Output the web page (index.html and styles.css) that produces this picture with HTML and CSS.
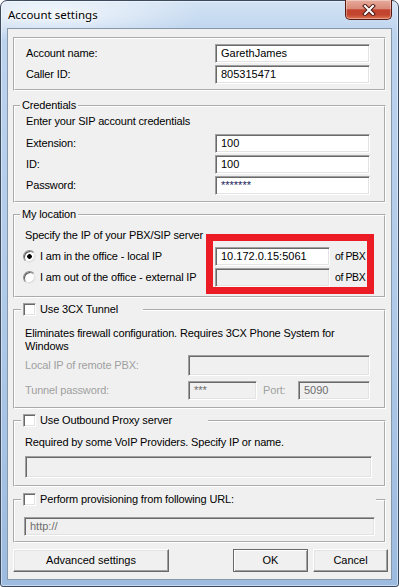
FILE: index.html
```html
<!DOCTYPE html>
<html>
<head>
<meta charset="utf-8">
<title>Account settings</title>
<link rel="stylesheet" href="styles.css">
</head>
<body>
<div class="window">
  <div class="titlebar">
    <span class="title">Account settings</span>
    <div class="close">
      <svg width="14" height="12" viewBox="0 0 14 12"><path d="M3 2 L11 10 M11 2 L3 10" stroke="#4d1a12" stroke-width="4" stroke-linecap="square"/><path d="M3 2 L11 10 M11 2 L3 10" stroke="#fff" stroke-width="2" stroke-linecap="square"/></svg>
    </div>
  </div>
  <div class="client">
    <div class="group g-account">
      <div class="form">
        <span class="lbl">Account name:</span><div class="edit">GarethJames</div>
        <span class="lbl">Caller ID:</span><div class="edit">805315471</div>
      </div>
    </div>

    <fieldset class="group g-cred">
      <legend class="legend-text">Credentials</legend>
      <div class="gb-body">
        <div class="note">Enter your SIP account credentials</div>
        <div class="form form-cred">
          <span class="lbl">Extension:</span><div class="edit">100</div>
          <span class="lbl">ID:</span><div class="edit">100</div>
          <span class="lbl">Password:</span><div class="edit pw">*******</div>
        </div>
      </div>
    </fieldset>

    <fieldset class="group g-loc">
      <legend class="legend-text">My location</legend>
      <div class="loc-body">
        <div class="note">Specify the IP of your PBX/SIP server</div>
        <div class="loc-rows">
          <span class="radio-lbl"><span class="radio checked"></span>I am in the office - local IP</span>
          <div class="edit">10.172.0.15:5061</div>
          <span class="pbx">of PBX</span>
          <span class="radio-lbl"><span class="radio"></span>I am out of the office - external IP</span>
          <div class="edit disabled"></div>
          <span class="pbx">of PBX</span>
        </div>
        <div class="highlight"></div>
      </div>
    </fieldset>

    <fieldset class="group g-tunnel">
      <legend class="legend-check lg-tunnel"><span class="check"></span>Use 3CX Tunnel</legend>
      <div class="gb-body">
        <div class="note two">Eliminates firewall configuration. Requires 3CX Phone System for<br>Windows</div>
        <div class="tun-row tun-row1">
          <span class="lbl dis">Local IP of remote PBX:</span>
          <div class="edit disabled wide"></div>
        </div>
        <div class="tun-row tun-row2">
          <span class="lbl dis">Tunnel password:</span>
          <div class="edit disabled pass">***</div>
          <span class="lbl dis port-lbl">Port:</span>
          <div class="edit disabled port">5090</div>
        </div>
      </div>
    </fieldset>

    <fieldset class="group g-proxy">
      <legend class="legend-check lg-proxy"><span class="check"></span>Use Outbound Proxy server</legend>
      <div class="gb-body">
        <div class="note">Required by some VoIP Providers. Specify IP or name.</div>
        <div class="edit disabled proxy-edit"></div>
      </div>
    </fieldset>

    <fieldset class="group g-prov">
      <legend class="legend-check lg-prov"><span class="check"></span>Perform provisioning from following URL:</legend>
      <div class="gb-body">
        <div class="edit disabled prov-edit">http://</div>
      </div>
    </fieldset>

    <div class="buttons">
      <div class="btn btn-adv">Advanced settings</div>
      <div class="btn btn-ok">OK</div>
      <div class="btn btn-cancel">Cancel</div>
    </div>
  </div>
</div>
</body>
</html>
```
FILE: styles.css
```css
* { box-sizing: border-box; }
html, body { margin: 0; padding: 0; background: #ffffff; }
body {
  font-family: "Liberation Sans", Arial, sans-serif;
  font-size: 11px;
  letter-spacing: -0.15px;
  color: #000;
}

.window {
  width: 399px;
  height: 587px;
  border: 1px solid #3b4a5c;
  border-radius: 7px 7px 3px 3px;
  display: flex;
  flex-direction: column;
  background:
    radial-gradient(ellipse 150px 30px at 50px 12px, rgba(255,255,255,0.75), rgba(255,255,255,0) 100%),
    linear-gradient(180deg, #d3e3f4 0%, #bcd3ee 6%, #b0cae9 50%, #9dbbe0 100%);
  box-shadow: inset 0 0 0 1px rgba(255,255,255,0.45);
}

.titlebar {
  height: 27px;
  display: flex;
  align-items: flex-start;
  padding-left: 7px;
}
.title {
  font-family: "Noto Sans", "Liberation Sans", sans-serif;
  font-size: 11.5px;
  letter-spacing: 0;
  line-height: 27px;
  color: #000;
  text-shadow: 0 0 6px #fff, 0 0 3px #fff;
}
.close {
  width: 47px;
  height: 20px;
  margin: -1px 6px 0 auto;
  border: 1px solid #5a1a12;
  border-top: none;
  border-radius: 0 0 5px 5px;
  background: linear-gradient(180deg, #e7ab9c 0%, #d98a78 45%, #c24430 52%, #c3452f 78%, #dd7552 100%);
  box-shadow: inset 0 0 0 1px rgba(255,255,255,0.35);
  display: flex;
  align-items: center;
  justify-content: center;
}

.client {
  flex: 1;
  margin: 0 6px 6px 6px;
  border: 1px solid #8797aa;
  background: #f0f0f0;
  padding: 8px 0 0 5px;
  display: flex;
  flex-direction: column;
}

.group {
  width: 373px;
  margin: 0;
  padding: 0;
  border: 2px groove #ffffff;
  min-width: 0;
}

.legend-text {
  margin-left: 5px;
  padding: 0 2px;
  line-height: 13px;
  height: 13px;
}
.legend-check {
  margin-left: 6px;
  padding: 0 0 0 2px;
  height: 13px;
  line-height: 13px;
  display: flex;
  align-items: center;
}
.lg-tunnel { width: 122px; }
.lg-proxy { width: 187px; }
.lg-prov { width: 355px; }

.check {
  width: 13px;
  height: 13px;
  margin-right: 4px;
  flex: none;
  background: #fff;
  border: 1px solid;
  border-color: #a0a0a0 #ffffff #ffffff #a0a0a0;
  box-shadow: inset 1px 1px 0 #696969, inset -1px -1px 0 #e3e3e3;
}

.note { line-height: 13px; white-space: nowrap; }

.lbl { line-height: 13px; white-space: nowrap; }
.dis { color: #a0a0a0; }

.edit {
  height: 19px;
  background: #fff;
  border: 1px solid;
  border-color: #a0a0a0 #ffffff #ffffff #a0a0a0;
  box-shadow: inset 1px 1px 0 #696969, inset -1px -1px 0 #e3e3e3;
  padding: 0 0 0 5px;
  line-height: 17px;
  white-space: nowrap;
  overflow: hidden;
  letter-spacing: 0;
}
.edit.disabled { background: #f0f0f0; color: #6d6d6d; }
.edit.pw { color: #1a1a5a; }

/* account group */
.g-account { height: 54px; padding: 5px 0 0 11px; }
.form {
  display: grid;
  grid-template-columns: 189px 155px;
  grid-auto-rows: 19px;
  row-gap: 2px;
  align-items: center;
}

/* credentials */
.g-cred { margin-top: 8px; height: 104px; padding-top: 3px; }
.g-cred .gb-body { padding-left: 11px; }
.form-cred { margin-top: 6px; }

/* location */
.g-loc { margin-top: 5px; height: 90px; padding-top: 8px; }
.loc-body { position: relative; }
.g-loc .note { padding-left: 10px; }
.loc-rows {
  margin-top: 5px;
  padding-left: 8px;
  display: grid;
  grid-template-columns: 192px 115px auto;
  grid-auto-rows: 19px;
  row-gap: 2px;
  align-items: center;
}
.radio-lbl {
  display: flex;
  align-items: center;
  white-space: nowrap;
  overflow: hidden;
  line-height: 13px;
}
.radio {
  width: 13px;
  height: 13px;
  flex: none;
  margin-right: 4px;
  border-radius: 50%;
  background: #fff;
  border: 1px solid;
  border-color: #8d8d8d #e8e8e8 #e8e8e8 #8d8d8d;
  box-shadow: inset 1px 1px 0 #5a5a5a, inset -1px -1px 0 #dcdcdc;
}
.radio.checked {
  background: radial-gradient(circle at 50% 50%, #000 0, #000 2px, #fff 2.6px);
}
.pbx { padding-left: 5px; line-height: 13px; font-size: 10.5px; letter-spacing: -0.4px; }
.highlight {
  position: absolute;
  left: 191px;
  top: 5px;
  width: 168px;
  height: 60px;
  border: 7px solid #ec1c24;
}

/* tunnel */
.g-tunnel { margin-top: 5px; height: 106px; padding-top: 11px; }
.g-tunnel .gb-body { padding-left: 10px; }
.tun-row {
  display: grid;
  align-items: center;
}
.tun-row1 { margin-top: 2px; grid-template-columns: 163px 182px; height: 21px; }
.tun-row1 .edit { height: 21px; }
.tun-row2 { margin-top: 5px; grid-template-columns: 163px 69px 41px 72px; height: 19px; }
.port-lbl { padding-left: 6px; }

/* proxy */
.g-proxy { margin-top: 5px; height: 73px; padding-top: 9px; }
.g-proxy .gb-body { padding-left: 10px; }
.proxy-edit { margin-top: 7px; width: 347px; height: 22px; }

/* provisioning */
.g-prov { margin-top: 6px; height: 50px; padding-top: 11px; }
.g-prov .gb-body { padding-left: 9px; }
.prov-edit { width: 351px; }

/* buttons */
.buttons {
  margin-top: 6px;
  width: 375px;
  display: flex;
  gap: 5px;
}
.btn {
  height: 23px;
  line-height: 21px;
  text-align: center;
  background: #f0f0f0;
  border: 1px solid;
  border-color: #ffffff #696969 #696969 #ffffff;
  box-shadow: inset -1px -1px 0 #a0a0a0, inset 1px 1px 0 #e3e3e3;
  letter-spacing: 0;
}
.btn-adv { width: 156px; }
.btn-ok {
  width: 75px;
  margin-left: auto;
  border-color: #696969;
  box-shadow: inset 1px 1px 0 #ffffff, inset -1px -1px 0 #a0a0a0;
}
.btn-cancel { width: 75px; }
```
